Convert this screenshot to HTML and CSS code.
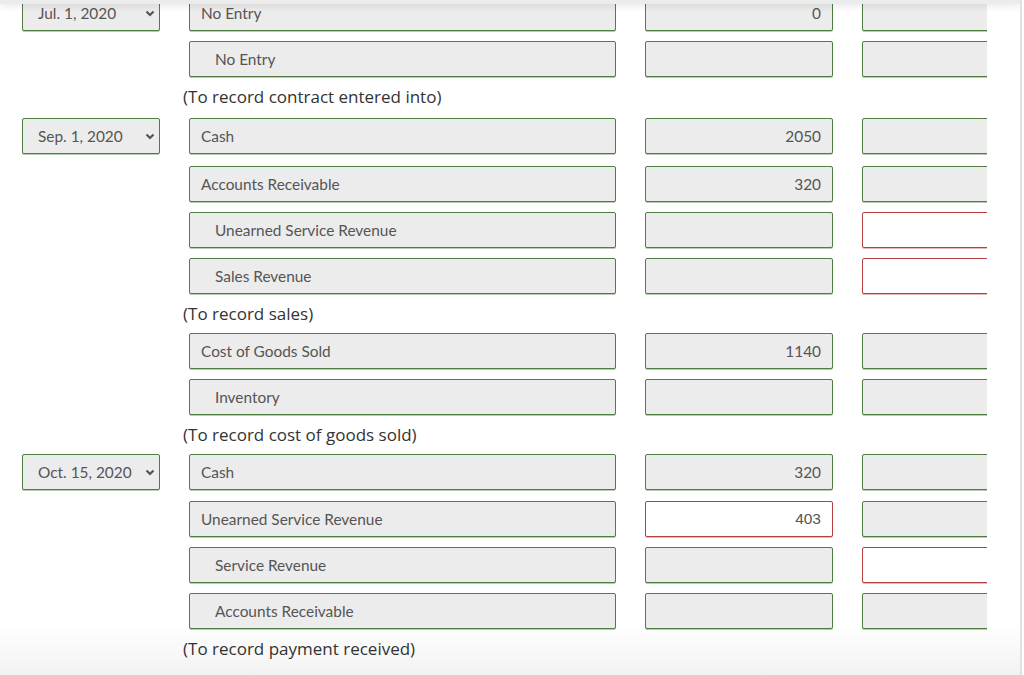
FILE: index.html
```html
<!DOCTYPE html>
<html lang="en">
<head>
<meta charset="utf-8">
<title>Journal entries</title>
<link rel="stylesheet" href="styles.css">
</head>
<body>
<div class="panel">
  <div class="journal">
    <div class="group">
      <div class="row">
        <div class="select"><span>Jul. 1, 2020</span><svg class="chev" width="10" height="7" viewBox="0 0 10 7"><polyline points="1.5,1.5 5,5 8.5,1.5" fill="none" stroke="#555" stroke-width="2.2"/></svg></div>
        <div class="field acct">No Entry</div>
        <div class="field amt">0</div>
        <div class="field amt2"></div>
      </div>
      <div class="row">
        <div></div>
        <div class="field acct credit">No Entry</div>
        <div class="field amt"></div>
        <div class="field amt2"></div>
      </div>
      <div class="note">(To record contract entered into)</div>
    </div>

    <div class="group">
      <div class="row">
        <div class="select"><span>Sep. 1, 2020</span><svg class="chev" width="10" height="7" viewBox="0 0 10 7"><polyline points="1.5,1.5 5,5 8.5,1.5" fill="none" stroke="#555" stroke-width="2.2"/></svg></div>
        <div class="field acct">Cash</div>
        <div class="field amt">2050</div>
        <div class="field amt2"></div>
      </div>
      <div class="row first-gap">
        <div></div>
        <div class="field acct">Accounts Receivable</div>
        <div class="field amt">320</div>
        <div class="field amt2"></div>
      </div>
      <div class="row">
        <div></div>
        <div class="field acct credit">Unearned Service Revenue</div>
        <div class="field amt"></div>
        <div class="field amt2 error"></div>
      </div>
      <div class="row">
        <div></div>
        <div class="field acct credit">Sales Revenue</div>
        <div class="field amt"></div>
        <div class="field amt2 error"></div>
      </div>
      <div class="note short">(To record sales)</div>
    </div>

    <div class="group">
      <div class="row">
        <div></div>
        <div class="field acct">Cost of Goods Sold</div>
        <div class="field amt">1140</div>
        <div class="field amt2"></div>
      </div>
      <div class="row">
        <div></div>
        <div class="field acct credit">Inventory</div>
        <div class="field amt"></div>
        <div class="field amt2"></div>
      </div>
      <div class="note short">(To record cost of goods sold)</div>
    </div>

    <div class="group">
      <div class="row">
        <div class="select"><span>Oct. 15, 2020</span><svg class="chev" width="10" height="7" viewBox="0 0 10 7"><polyline points="1.5,1.5 5,5 8.5,1.5" fill="none" stroke="#555" stroke-width="2.2"/></svg></div>
        <div class="field acct">Cash</div>
        <div class="field amt">320</div>
        <div class="field amt2"></div>
      </div>
      <div class="row first-gap-sm">
        <div></div>
        <div class="field acct">Unearned Service Revenue</div>
        <div class="field amt error typed">403</div>
        <div class="field amt2"></div>
      </div>
      <div class="row">
        <div></div>
        <div class="field acct credit">Service Revenue</div>
        <div class="field amt"></div>
        <div class="field amt2 error"></div>
      </div>
      <div class="row">
        <div></div>
        <div class="field acct credit">Accounts Receivable</div>
        <div class="field amt"></div>
        <div class="field amt2"></div>
      </div>
      <div class="note">(To record payment received)</div>
    </div>
  </div>
  <div class="topbar"></div>
  <div class="fade"></div>
</div>
</body>
</html>
```

FILE: styles.css
```css
html, body {
  margin: 0;
  padding: 0;
  background: #ffffff;
  overflow: hidden;
}

.panel {
  position: relative;
  width: 1020px;
  height: 675px;
  border-right: 2px solid #e1e1e1;
  overflow: hidden;
  font-family: Lato, "Open Sans", sans-serif;
}

.journal {
  width: 987px;
  overflow: hidden;
  margin-top: -5px;
  display: flex;
  flex-direction: column;
  gap: 10px;
}

.group {
  display: flex;
  flex-direction: column;
  gap: 10px;
}

.row {
  display: grid;
  grid-template-columns: 138px 427px 188px 160px;
  column-gap: 29px;
  padding-left: 22px;
  height: 36px;
}

.row.first-gap {
  margin-top: 2px;
}

.row.first-gap-sm {
  margin-top: 1px;
}

.select,
.field {
  box-sizing: border-box;
  height: 36px;
  background: #ececec;
  border: 1px solid #4f7d42;
  border-radius: 2px;
  box-shadow: 0 1px 0 #b5cdb0;
  color: #555555;
  font-size: 15.4px;
  display: flex;
  align-items: center;
}

.select {
  padding: 0 0 0 15px;
  justify-content: space-between;
}

.chev {
  margin-right: 4px;
}

.acct {
  padding-left: 11px;
}

.acct.credit {
  padding-left: 25px;
}

.amt {
  justify-content: flex-end;
  padding-right: 11px;
}

.error {
  background: #ffffff;
  border-color: #b5403f;
  box-shadow: 0 1px 0 #e6b9b8;
}

.typed {
  font-family: "Liberation Sans", Arial, sans-serif;
  font-size: 15.5px;
}

.note {
  height: 21px;
  line-height: 20px;
  padding-left: 183px;
  font-family: "Open Sans", "DejaVu Sans", sans-serif;
  font-size: 17px;
  color: #333333;
}

.note.short {
  height: 19px;
  line-height: 19px;
}

.topbar {
  position: absolute;
  top: 0;
  left: 0;
  right: 0;
  height: 4px;
  background: #ececec;
  box-shadow: 0 2px 6px rgba(0, 0, 0, 0.12);
}

.fade {
  position: absolute;
  left: 0;
  right: 0;
  bottom: 0;
  height: 50px;
  background: linear-gradient(rgba(0, 0, 0, 0), rgba(0, 0, 0, 0.05));
  pointer-events: none;
}
```
